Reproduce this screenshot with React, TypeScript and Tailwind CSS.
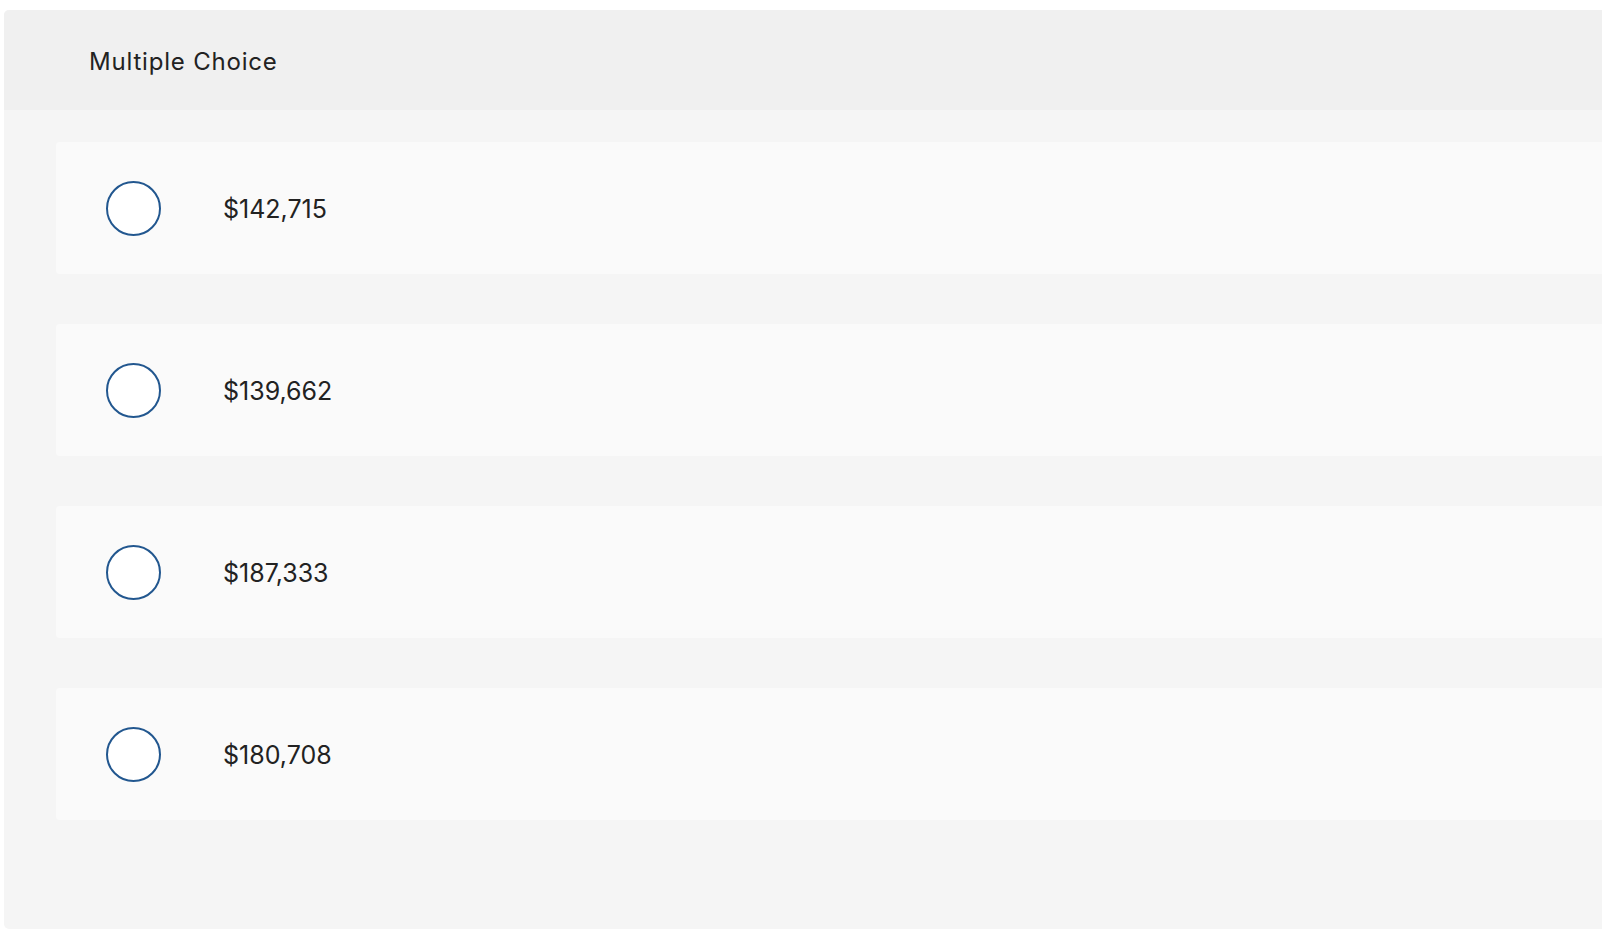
import React from "react";

const options = ["$142,715", "$139,662", "$187,333", "$180,708"];

export default function App() {
  return (
    <div className="w-[1602px] h-[942px] overflow-hidden bg-white pl-[4px] pt-[10px]" style={{ fontFamily: "Inter, Lato, sans-serif" }}>
      <div className="w-[1660px] rounded-[5px] overflow-hidden bg-[#f5f5f5]">
        <div className="h-[100px] bg-[#f0f0f0] flex items-center pl-[85px] pt-[4px]">
          <span className="text-[24px] tracking-[0.8px] text-[#222222]">Multiple Choice</span>
        </div>
        <div className="pt-[32px] pb-[109px] pl-[52px] flex flex-col gap-[50px]">
          {options.map((o) => (
            <div key={o} className="h-[132px] rounded-[4px] bg-[#fafafa] flex items-center pl-[50px]">
              <div className="w-[55px] h-[55px] rounded-full border-2 border-[#22578f] bg-white shrink-0" />
              <span className="ml-[62px] pt-[4px] text-[25px] text-[#222222]">{o}</span>
            </div>
          ))}
        </div>
      </div>
    </div>
  );
}
